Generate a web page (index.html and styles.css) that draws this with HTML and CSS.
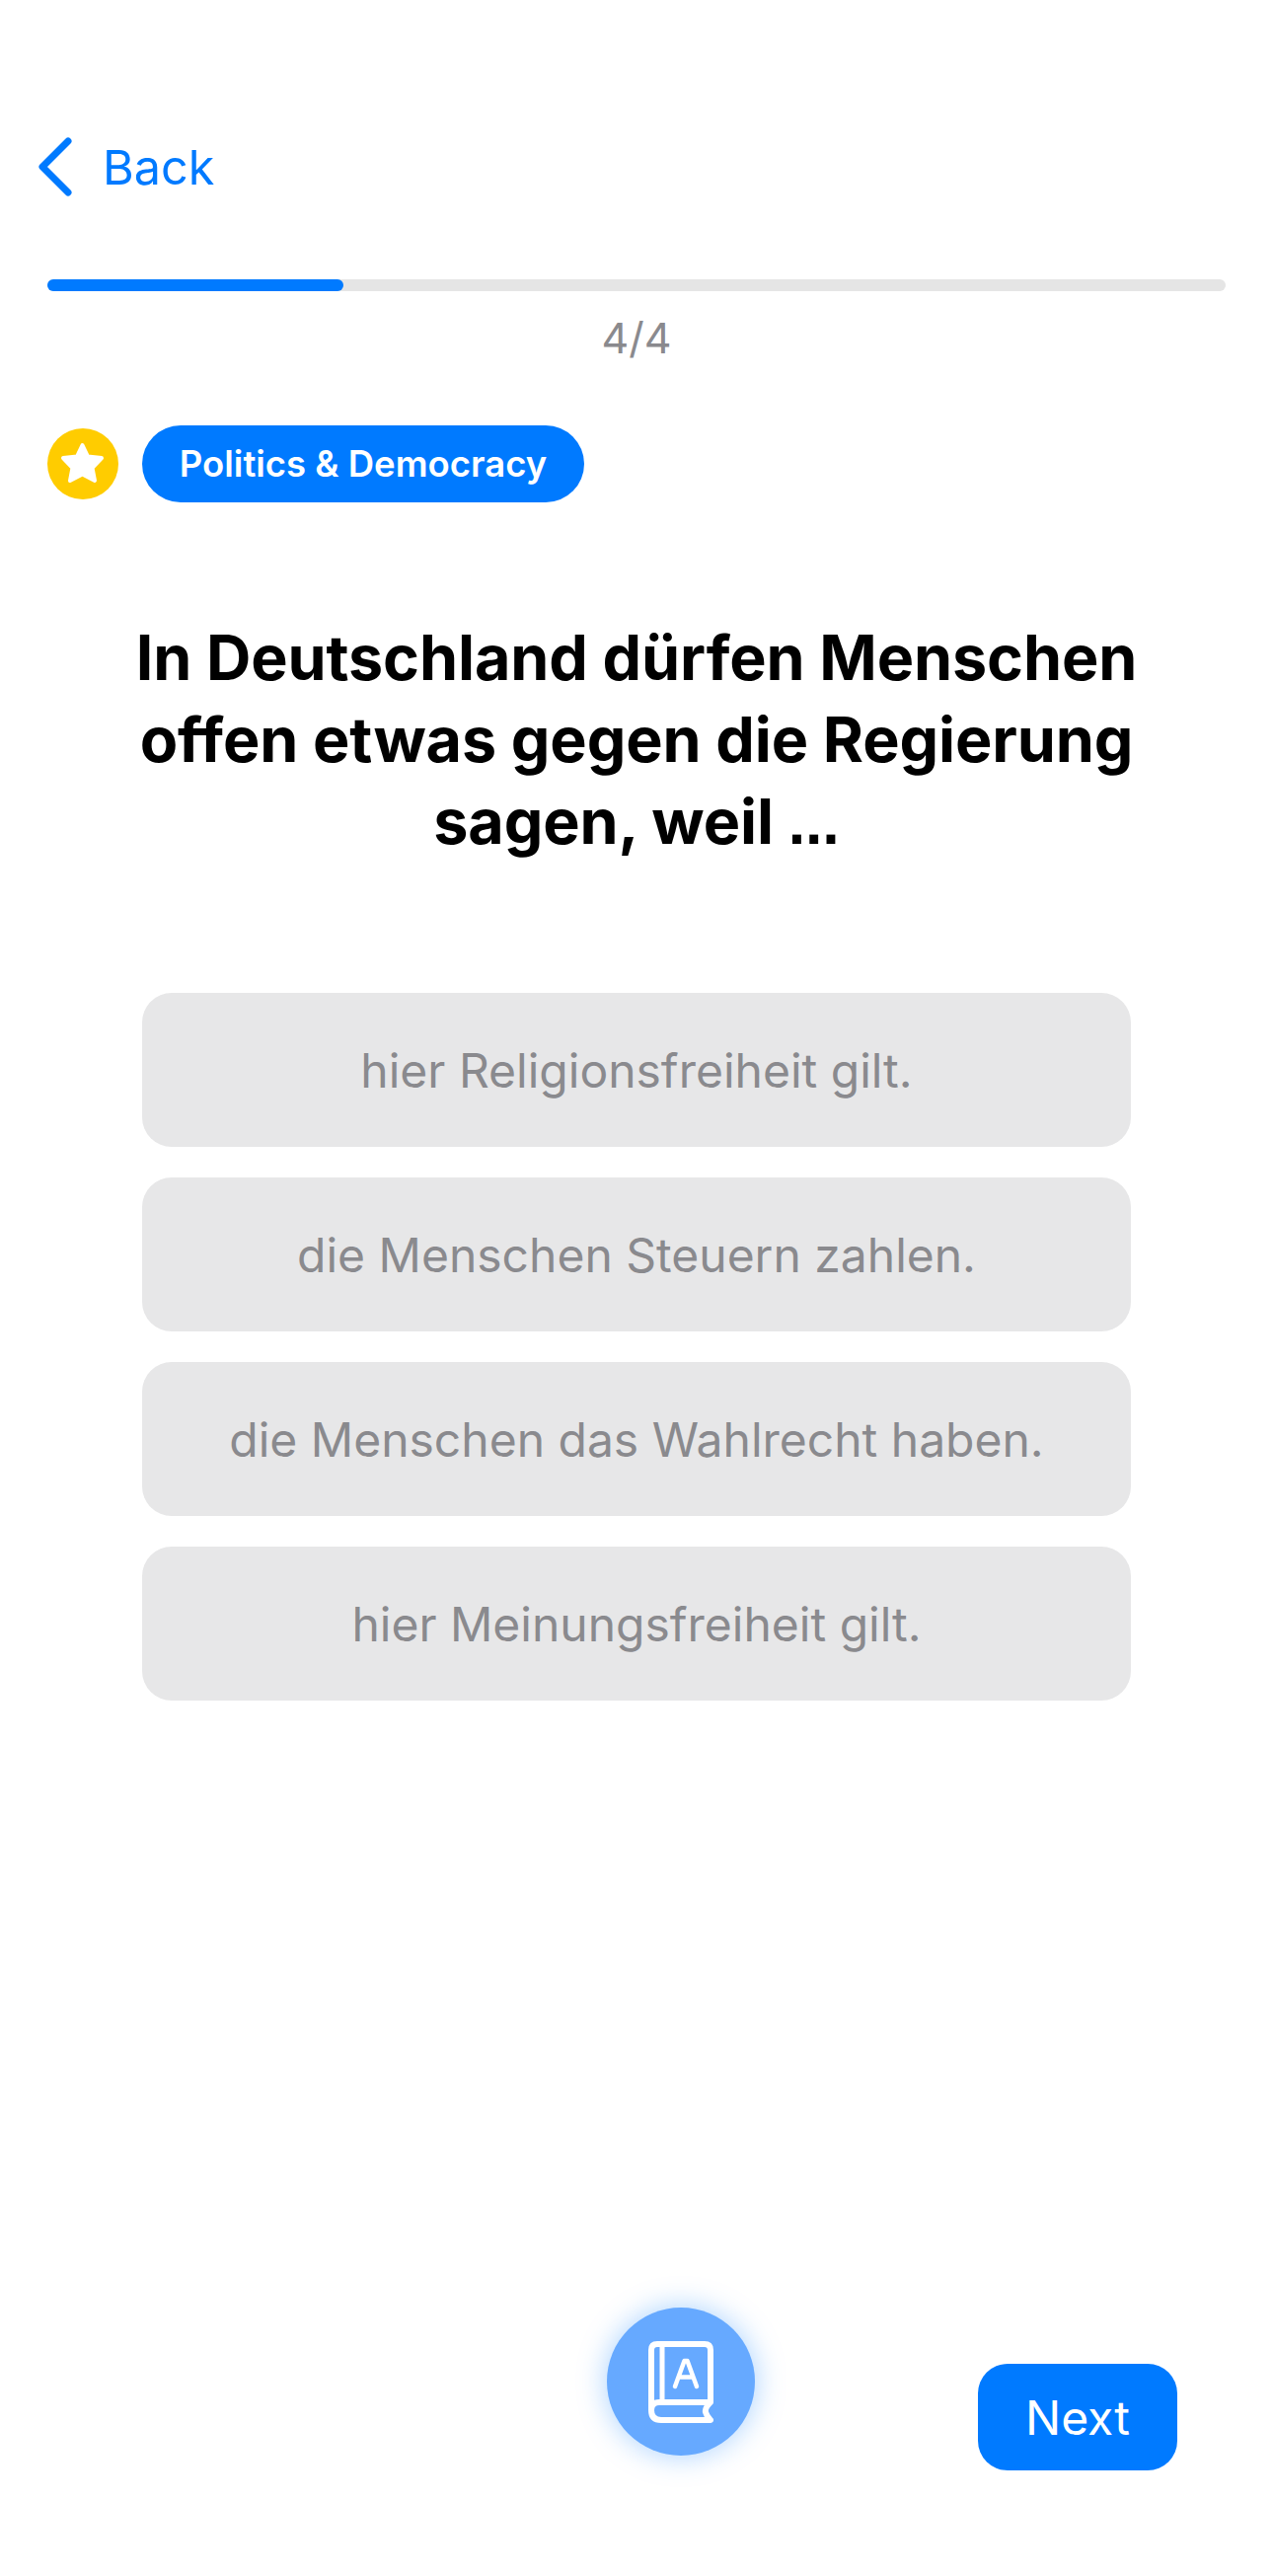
FILE: index.html
```html
<!DOCTYPE html>
<html lang="en">
<head>
  <meta charset="UTF-8" />
  <title>Quiz</title>
  <link rel="stylesheet" href="styles.css">
</head>
<body>
  <div class="screen">
    <a class="back">
      <svg class="back-icon" viewBox="0 0 36 60" fill="none"><path d="M31 4 L5 30 L31 56" stroke="#007aff" stroke-width="7" stroke-linecap="round" stroke-linejoin="round"/></svg>
      <span>Back</span>
    </a>

    <div class="progress"><div class="progress-fill"></div></div>
    <div class="counter">4/4</div>

    <div class="topic">
      <span class="star">
        <svg viewBox="0 0 72 72"><path d="M35.5 17 L41 28.5 L55 30 L45.5 40 L48 53 L35.5 46.5 L23 53 L25.5 40 L16 30 L30 28.5 Z" fill="#fff" stroke="#fff" stroke-width="4" stroke-linejoin="round"/></svg>
      </span>
      <span class="pill">Politics &amp; Democracy</span>
    </div>

    <h1 class="question"><span>In Deutschland dürfen Menschen offen etwas gegen die Regierung</span> <span>sagen, weil</span> <span class="dots">...</span></h1>

    <div class="answers">
      <button class="answer">hier Religionsfreiheit gilt.</button>
      <button class="answer">die Menschen Steuern zahlen.</button>
      <button class="answer">die Menschen das Wahlrecht haben.</button>
      <button class="answer">hier Meinungsfreiheit gilt.</button>
    </div>

    <div class="actions">
      <button class="book">
        <svg viewBox="0 0 66 83" fill="none" stroke="#fff" stroke-width="6" stroke-linecap="round" stroke-linejoin="round">
          <path d="M3 70 V9 Q3 3 9 3 H57 Q63 3 63 9 V62 Q57 68 58 72 Q59 76 63 80 H13 Q3 80 3 70 Q3 62 11 62 H62"/>
          <path d="M14 4 V61" stroke-width="5"/>
          <path d="M27 46 L36.5 20 H39.5 L49 46 M31 36.5 H45" stroke-width="4.5"/>
        </svg>
      </button>
      <button class="next">Next</button>
    </div>
  </div>
</body>
</html>
```

FILE: styles.css
```css
* {
  box-sizing: border-box;
}

body {
  margin: 0;
  background: #fff;
  font-family: Inter, "Liberation Sans", sans-serif;
}

button {
  font-family: inherit;
  border: none;
}

.screen {
  width: 1290px;
  height: 2610px;
  padding: 138px 48px 0;
  display: flex;
  flex-direction: column;
  overflow: hidden;
}

.back {
  display: flex;
  align-items: center;
  gap: 30px;
  margin-left: -10px;
  height: 62px;
  color: #007aff;
  font-size: 48.5px;
}

.back-icon {
  width: 36px;
  height: 60px;
}

.progress {
  margin-top: 83px;
  height: 12px;
  border-radius: 6px;
  background: #e5e5e5;
}

.progress-fill {
  width: 300px;
  height: 100%;
  border-radius: 6px;
  background: #007aff;
}

.counter {
  margin-top: 19px;
  height: 56px;
  line-height: 56px;
  text-align: center;
  font-size: 43px;
  color: #8a8a8e;
}

.topic {
  margin-top: 61px;
  display: flex;
  align-items: center;
  gap: 24px;
}

.star {
  width: 72px;
  height: 72px;
  border-radius: 50%;
  background: #ffcc00;
}

.star svg {
  display: block;
  width: 72px;
  height: 72px;
}

.pill {
  width: 448px;
  height: 78px;
  line-height: 78px;
  border-radius: 39px;
  background: #007aff;
  color: #fff;
  font-size: 36.5px;
  font-weight: 600;
  text-align: center;
}

.question {
  margin: 116px 0 0;
  padding: 0 80px;
  font-size: 62.8px;
  letter-spacing: -0.1px;
  font-weight: 700;
  line-height: 83px;
  text-align: center;
  color: #000;
}

.dots {
  font-family: "Liberation Sans", sans-serif;
  line-height: 1;
}

.answers {
  margin: 132px 96px 0;
  display: flex;
  flex-direction: column;
  gap: 31px;
}

.answer {
  height: 156px;
  border-radius: 30px;
  background: #e7e7e8;
  color: #8a8a8e;
  font-size: 48px;
  text-align: center;
}

.actions {
  margin-top: 615px;
  padding: 0 49px 0 567px;
  display: flex;
  justify-content: space-between;
  align-items: flex-start;
}

.book {
  width: 150px;
  height: 150px;
  border-radius: 50%;
  background: #66a9ff;
  box-shadow: 0 0 30px rgba(0, 122, 255, 0.35);
  display: flex;
  align-items: center;
  justify-content: center;
  padding: 0;
}

.book svg {
  width: 66px;
  height: 83px;
}

.next {
  margin-top: 57px;
  width: 202px;
  height: 108px;
  border-radius: 30px;
  background: #007aff;
  color: #fff;
  font-size: 48px;
}
```
